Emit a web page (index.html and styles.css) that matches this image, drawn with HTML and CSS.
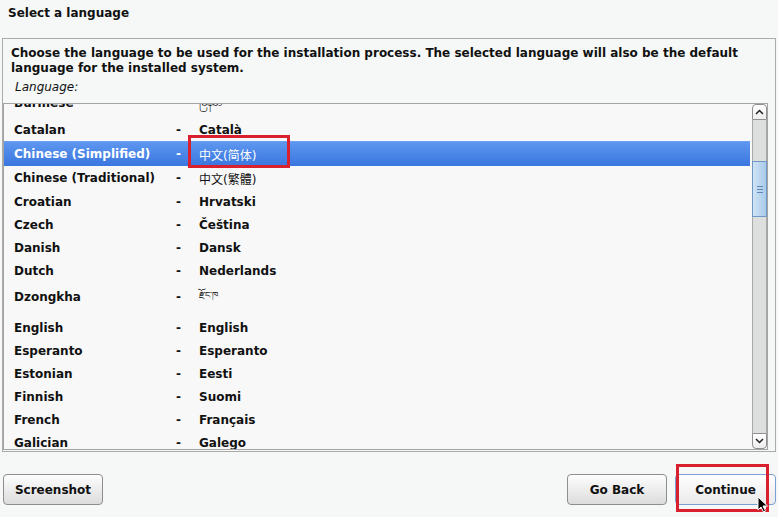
FILE: index.html
```html
<!DOCTYPE html>
<html lang="en">
<head>
    <meta charset="UTF-8">
    <title>Select a language</title>
    <link rel="stylesheet" href="styles.css">
</head>
<body>
  <div class="title">Select a language</div>
  <div class="panel">
    <div class="intro">Choose the language to be used for the installation process. The selected language will also be the default language for the installed system.</div>
    <div class="label">Language:</div>
    <div class="listbox">
      <div class="rows">
        <div class="rows-inner">
          <div class="row burmese"><span class="en">Burmese</span><span class="dash">-</span><span class="native plain">မြန်မာ</span></div>
          <div class="row"><span class="en">Catalan</span><span class="dash">-</span><span class="native">Català</span></div>
          <div class="row selected"><span class="en">Chinese (Simplified)</span><span class="dash">-</span><span class="native plain">中文(简体)</span></div>
          <div class="row cjk"><span class="en">Chinese (Traditional)</span><span class="dash">-</span><span class="native plain">中文(繁體)</span></div>
          <div class="row"><span class="en">Croatian</span><span class="dash">-</span><span class="native">Hrvatski</span></div>
          <div class="row"><span class="en">Czech</span><span class="dash">-</span><span class="native">Čeština</span></div>
          <div class="row"><span class="en">Danish</span><span class="dash">-</span><span class="native">Dansk</span></div>
          <div class="row"><span class="en">Dutch</span><span class="dash">-</span><span class="native">Nederlands</span></div>
          <div class="row tibetan"><span class="en">Dzongkha</span><span class="dash">-</span><span class="native plain small">རྫོང་ཁ</span></div>
          <div class="row"><span class="en">English</span><span class="dash">-</span><span class="native">English</span></div>
          <div class="row"><span class="en">Esperanto</span><span class="dash">-</span><span class="native">Esperanto</span></div>
          <div class="row"><span class="en">Estonian</span><span class="dash">-</span><span class="native">Eesti</span></div>
          <div class="row"><span class="en">Finnish</span><span class="dash">-</span><span class="native">Suomi</span></div>
          <div class="row"><span class="en">French</span><span class="dash">-</span><span class="native">Français</span></div>
          <div class="row"><span class="en">Galician</span><span class="dash">-</span><span class="native">Galego</span></div>
        </div>
      </div>
      <div class="scrollbar">
        <div class="sb-btn sb-up">
          <svg width="9" height="6" viewBox="0 0 9 6"><polyline points="1,5 4.5,1.5 8,5" fill="none" stroke="#222" stroke-width="1.5"/></svg>
        </div>
        <div class="sb-track">
          <div class="sb-thumb">
            <div class="grip"></div>
            <div class="grip"></div>
            <div class="grip"></div>
          </div>
        </div>
        <div class="sb-btn sb-down">
          <svg width="9" height="6" viewBox="0 0 9 6"><polyline points="1,1 4.5,4.5 8,1" fill="none" stroke="#222" stroke-width="1.5"/></svg>
        </div>
      </div>
    </div>
  </div>
  <div class="actions">
    <button class="btn">Screenshot</button>
    <div class="spacer"></div>
    <button class="btn">Go Back</button>
    <button class="btn focused">Continue</button>
  </div>

  <!-- annotation boxes and pointer drawn over the dialog -->
  <div class="mark mark-lang"></div>
  <div class="mark mark-continue"></div>
  <svg class="cursor" width="12" height="17" viewBox="0 0 12 17">
    <path d="M1 1 L1 14 L4 11 L6.5 16 L8.5 15 L6 10 L10.5 10 Z" fill="#000" stroke="#fff" stroke-width="1"/>
  </svg>
</body>
</html>
```

FILE: styles.css
```css
body {
    margin: 0;
    height: 517px;
    overflow: hidden;
    position: relative;
    background-color: #f5f8f7;
    font-family: "DejaVu Sans", "Noto Sans CJK SC", sans-serif;
    font-size: 12px;
    font-weight: bold;
    color: #111;
}
.title {
    height: 38px;
    box-sizing: border-box;
    padding: 5px 8px 0;
    line-height: 16px;
}
.panel {
    margin: 0 2px;
    border: 1px solid #a9aaa9;
}
.intro {
    padding: 7px 8px 0;
    line-height: 15px;
}
.label {
    margin: 4px 0 0 12px;
    line-height: 15px;
    font-weight: normal;
    font-style: italic;
}
.listbox {
    display: flex;
    height: 347px;
    box-sizing: border-box;
    margin: 8px 7px 1px 0;
    border: 1px solid #a3a4a3;
    background-color: #f8f8f8;
}
.rows {
    flex: 1;
    overflow: hidden;
    padding-right: 2px;
}
.rows-inner {
    margin-top: -16px;
}
.row {
    display: flex;
    align-items: center;
    height: 23px;
    padding-left: 10px;
    white-space: nowrap;
}
.row.burmese {
    height: 30px;
}
.row.cjk {
    height: 24px;
}
.row.tibetan {
    height: 34px;
    box-sizing: border-box;
    padding-bottom: 4px;
}
.row.selected {
    height: 25px;
    color: #fff;
    background: linear-gradient(#5d97ef, #3a76df);
    border-top: 1px solid #6aa0f0;
    box-sizing: border-box;
}
.en {
    width: 162px;
}
.dash {
    width: 23px;
}
.native.plain {
    font-weight: normal;
}
.native.small {
    font-size: 9px;
}
.scrollbar {
    width: 15px;
    display: flex;
    flex-direction: column;
}
.sb-btn {
    height: 16px;
    box-sizing: border-box;
    border: 1px solid #8e8f8e;
    background: linear-gradient(#ffffff, #eeeeee);
    display: flex;
    justify-content: center;
    align-items: center;
}
.sb-up {
    border-radius: 4px 4px 0 0;
}
.sb-down {
    border-radius: 0 0 4px 4px;
}
.sb-track {
    flex: 1;
    background-color: #dcdfdd;
    border-left: 1px solid #a8aaa8;
    border-right: 1px solid #a8aaa8;
}
.sb-thumb {
    margin-top: 41px;
    height: 56px;
    box-sizing: border-box;
    border: 1px solid #6f98c6;
    background: linear-gradient(90deg, #cfe3f5, #a9cbea);
    display: flex;
    flex-direction: column;
    justify-content: center;
    align-items: center;
    gap: 2px;
    margin-left: -1px;
    margin-right: -1px;
}
.grip {
    width: 6px;
    height: 1px;
    background-color: #5f86b4;
}
.actions {
    display: flex;
    gap: 8px;
    margin-top: 22px;
    padding: 0 2px 0 3px;
}
.spacer {
    flex: 1;
}
.btn {
    width: 100px;
    height: 31px;
    border: 1px solid #8e8e8e;
    border-radius: 4px;
    background: linear-gradient(#fdfdfd, #dcdcdc);
    font-family: inherit;
    font-size: 12px;
    font-weight: bold;
    color: #111;
    padding: 0;
}
.btn.focused {
    width: 101px;
    border-color: #7a9fd6;
    background: linear-gradient(#ffffff, #eaeaea);
}
.mark {
    position: absolute;
    box-sizing: border-box;
    border: 3px solid #d8202e;
}
.mark-lang {
    left: 188px;
    top: 135px;
    width: 102px;
    height: 33px;
}
.mark-continue {
    left: 676px;
    top: 464px;
    width: 93px;
    height: 48px;
}
.cursor {
    position: absolute;
    left: 757px;
    top: 496px;
}
```
